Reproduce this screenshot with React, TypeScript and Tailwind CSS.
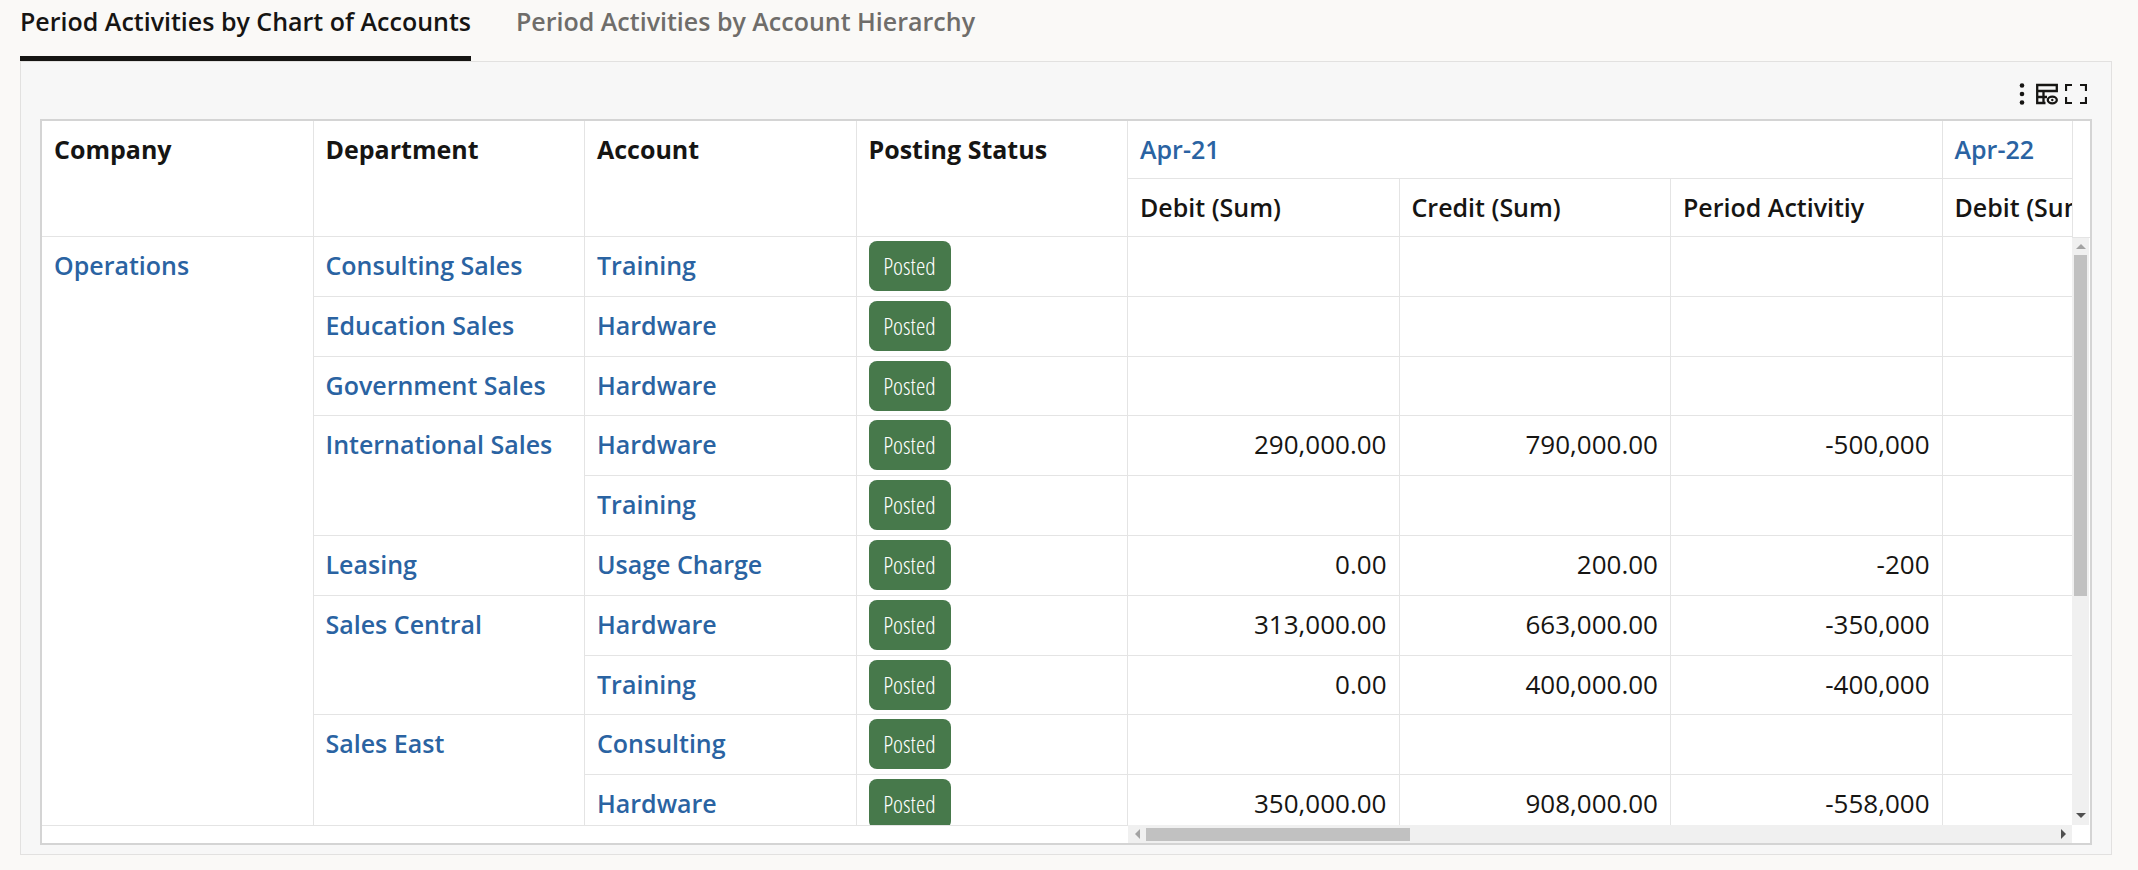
import { useState } from "react";

type Row = {
  company?: string;
  companySpan?: number;
  department?: string;
  departmentSpan?: number;
  account: string;
  debit?: string;
  credit?: string;
  activity?: string;
};

const rows: Row[] = [
  { company: "Operations", companySpan: 10, department: "Consulting Sales", account: "Training" },
  { department: "Education Sales", account: "Hardware" },
  { department: "Government Sales", account: "Hardware" },
  {
    department: "International Sales",
    departmentSpan: 2,
    account: "Hardware",
    debit: "290,000.00",
    credit: "790,000.00",
    activity: "-500,000",
  },
  { account: "Training" },
  { department: "Leasing", account: "Usage Charge", debit: "0.00", credit: "200.00", activity: "-200" },
  {
    department: "Sales Central",
    departmentSpan: 2,
    account: "Hardware",
    debit: "313,000.00",
    credit: "663,000.00",
    activity: "-350,000",
  },
  { account: "Training", debit: "0.00", credit: "400,000.00", activity: "-400,000" },
  { department: "Sales East", departmentSpan: 2, account: "Consulting" },
  { account: "Hardware", debit: "350,000.00", credit: "908,000.00", activity: "-558,000" },
];

const tabs = ["Period Activities by Chart of Accounts", "Period Activities by Account Hierarchy"];

const line = "border-r border-b border-[#e4e4e4]";
const labelCell = `${line} px-3 pt-3 text-left align-top font-semibold`;
const numberCell = `${line} px-3 pt-3 text-right align-top text-[26px] leading-8 font-normal`;

function Link({ children }: { children: string }) {
  return (
    <a href="#" className="text-[#2a63a2] hover:underline">
      {children}
    </a>
  );
}

function MoreIcon() {
  return (
    <svg viewBox="0 0 6 22" className="h-[22px] w-[6px]" fill="#161513" aria-hidden="true">
      <circle cx="3" cy="2.5" r="2.3" />
      <circle cx="3" cy="11" r="2.3" />
      <circle cx="3" cy="19.5" r="2.3" />
    </svg>
  );
}

function TableViewIcon() {
  return (
    <svg viewBox="0 0 22 22" className="size-[22px]" fill="none" stroke="#161513" strokeWidth="2.3" aria-hidden="true">
      <path d="M9.5 20H1.200V2h19.600v6H1M7.500 8v12M1 14h10" />
      <ellipse cx="16.300" cy="17" rx="4.500" ry="3.300" />
      <circle cx="16.300" cy="17" r="1.200" fill="#161513" stroke="none" />
    </svg>
  );
}

function ExpandIcon() {
  return (
    <svg viewBox="0 0 22 22" className="size-[22px]" fill="none" stroke="#161513" strokeWidth="2.2" aria-hidden="true">
      <path d="M1 8V2h6M15 2h6v6M21 14v6h-6M7 20H1v-6" />
    </svg>
  );
}

export default function App() {
  const [active, setActive] = useState(0);

  return (
    <main className="min-h-screen bg-[#faf9f7] pr-[26px] pb-4 pl-5 font-['Open_Sans','Noto_Sans',sans-serif] text-[25px] leading-8 text-[#161513]">
      <div role="tablist" className="flex gap-[45px]">
        {tabs.map((tab, index) => (
          <button
            key={tab}
            type="button"
            role="tab"
            aria-selected={active === index}
            onClick={() => setActive(index)}
            className={
              active === index
                ? "border-b-[5px] border-[#161513] pt-[5px] pb-[19px] font-semibold"
                : "border-b-[5px] border-transparent pt-[5px] pb-[19px] font-semibold text-[#6f6d6a]"
            }
          >
            {tab}
          </button>
        ))}
      </div>

      <section className="border border-[#e2e1e0] bg-[#f7f7f7] px-[19px] pb-[9px]">
        <div className="flex h-[57px] items-center justify-end gap-[7px] pt-[7px] pr-[5px]">
          <button type="button" aria-label="More actions" className="mr-1">
            <MoreIcon />
          </button>
          <button type="button" aria-label="Table view options">
            <TableViewIcon />
          </button>
          <button type="button" aria-label="Expand">
            <ExpandIcon />
          </button>
        </div>

        <div className="border-2 border-[#d4d4d4] bg-white">
          <div className="flex h-[704px]">
            <div className="min-w-0 flex-1 overflow-hidden">
              <table className="h-[714px] w-[107%] table-fixed border-separate border-spacing-0">
                <thead>
                  <tr className="h-[58px]">
                    {["Company", "Department", "Account", "Posting Status"].map((name) => (
                      <th key={name} scope="col" rowSpan={2} className={`${line} px-3 pt-3 text-left align-top font-bold`}>
                        {name}
                      </th>
                    ))}
                    <th scope="colgroup" colSpan={3} className={labelCell}>
                      <Link>Apr-21</Link>
                    </th>
                    <th scope="colgroup" className={labelCell}>
                      <Link>Apr-22</Link>
                    </th>
                  </tr>
                  <tr className="h-[58px]">
                    {["Debit (Sum)", "Credit (Sum)", "Period Activitiy", "Debit (Sum)"].map((name, index) => (
                      <th key={index} scope="col" className={`${labelCell} whitespace-nowrap`}>
                        {name}
                      </th>
                    ))}
                  </tr>
                </thead>
                <tbody>
                  {rows.map((row, index) => (
                    <tr key={index}>
                      {row.company && (
                        <th scope="rowgroup" rowSpan={row.companySpan} className={labelCell}>
                          <Link>{row.company}</Link>
                        </th>
                      )}
                      {row.department && (
                        <th scope="rowgroup" rowSpan={row.departmentSpan ?? 1} className={labelCell}>
                          <Link>{row.department}</Link>
                        </th>
                      )}
                      <th scope="row" className={labelCell}>
                        <Link>{row.account}</Link>
                      </th>
                      <td className={`${line} px-3 pt-1 align-top`}>
                        <span className="flex h-[50px] w-[82px] items-center justify-center rounded-lg bg-[#47794b] font-['Open_Sans_Condensed_Light','Noto_Sans_Condensed','Liberation_Sans_Narrow','Noto_Sans_CJK_SC',sans-serif] text-2xl font-normal text-white">
                          Posted
                        </span>
                      </td>
                      <td className={numberCell}>{row.debit}</td>
                      <td className={numberCell}>{row.credit}</td>
                      <td className={numberCell}>{row.activity}</td>
                      <td className={numberCell} />
                    </tr>
                  ))}
                </tbody>
              </table>
            </div>

            <div className="flex w-[18px] flex-col">
              <div className="h-[117px] border-b border-l border-[#e4e4e4]" />
              <div className="mr-px flex flex-1 flex-col items-center bg-[#f0f0f0]">
                <button type="button" aria-label="Scroll up" className="flex h-[17px] w-full items-center justify-center">
                  <svg viewBox="0 0 10 5" className="h-[5px] w-[10px]" fill="#a3a3a3">
                    <path d="M0 5 5 0l5 5z" />
                  </svg>
                </button>
                <div className="h-[341px] w-[13px] bg-[#c1c1c1]" />
                <button type="button" aria-label="Scroll down" className="mt-auto flex h-[20px] w-full items-center justify-center">
                  <svg viewBox="0 0 10 5" className="h-[5px] w-[10px]" fill="#505050">
                    <path d="M0 0 5 5l5-5z" />
                  </svg>
                </button>
              </div>
            </div>
          </div>

          <div className="flex h-[18px] pr-[18px]">
            <div className="w-[53.5%] border-t border-[#e4e4e4]" />
            <div className="flex flex-1 items-center bg-[#f0f0f0]">
              <button type="button" aria-label="Scroll left" className="flex h-full w-[18px] items-center justify-center">
                <svg viewBox="0 0 5 10" className="h-[10px] w-[5px]" fill="#a3a3a3">
                  <path d="M5 0 0 5l5 5z" />
                </svg>
              </button>
              <div className="h-[13px] w-[28%] bg-[#c1c1c1]" />
              <button type="button" aria-label="Scroll right" className="ml-auto flex h-full w-[18px] items-center justify-center">
                <svg viewBox="0 0 5 10" className="h-[10px] w-[5px]" fill="#505050">
                  <path d="M0 0l5 5-5 5z" />
                </svg>
              </button>
            </div>
          </div>
        </div>
      </section>
    </main>
  );
}
